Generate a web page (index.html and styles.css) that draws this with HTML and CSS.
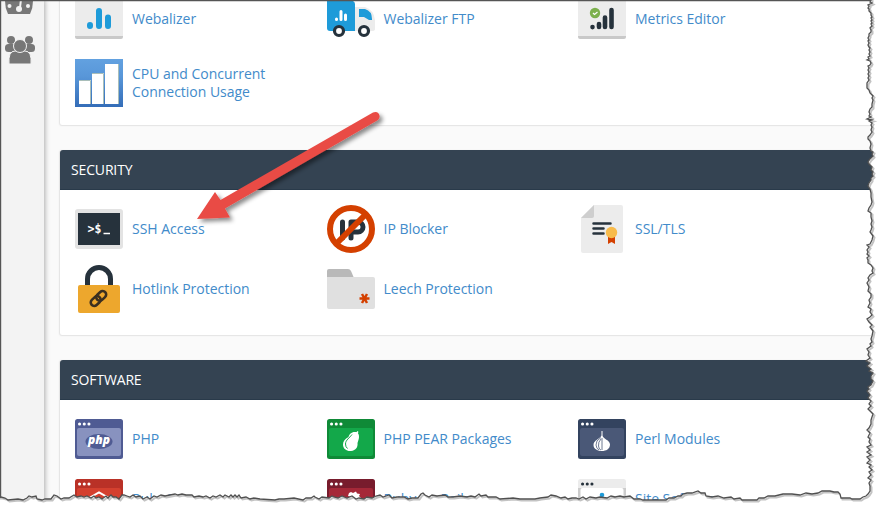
FILE: index.html
```html
<!DOCTYPE html>
<html lang="en">
<head>
<meta charset="utf-8">
<title>cPanel</title>
<link rel="stylesheet" href="styles.css">
</head>
<body>
<div class="app">
  <nav class="sidebar">
    <svg class="nav-icon" width="30" height="28" viewBox="0 0 30 28"><path d="M3 28Q0 22 0 15A14 14 0 0 1 28 15Q28 22 25 28Z" fill="#777"/><circle cx="4.500" cy="20" r="2" fill="#f3f3f3"/><circle cx="23" cy="20" r="2" fill="#f3f3f3"/><path d="M16 13L15 22" stroke="#f3f3f3" stroke-width="2"/><circle cx="14" cy="23" r="3" fill="#f3f3f3"/></svg>
    <svg class="nav-icon" width="30" height="28" viewBox="0 0 30 28" fill="#777"><circle cx="6" cy="4" r="4"/><circle cx="24" cy="4" r="4"/><rect y="8" width="11" height="8" rx="3.500"/><rect x="19" y="8" width="11" height="8" rx="3.500"/><path d="M4 28Q3 15 10 15H20Q27 15 26 28Z" stroke="#f3f3f3"/><circle cx="15" cy="10" r="6.500" stroke="#f3f3f3"/></svg>
  </nav>
  <main class="content">
    <section class="panel metrics">
      <div class="grid">
        <a class="item"><svg width="48" height="48" viewBox="0 0 48 48"><rect width="48" height="44" rx="2" fill="#c9c9c9"/><path d="M0 0H48V41H0Z" fill="#ececec"/><path d="M15 30v1M24 16v15M33 22.500v8.500" stroke="#1e9bd9" stroke-width="6" stroke-linecap="round"/></svg><span>Webalizer</span></a>
        <a class="item"><svg width="48" height="48" viewBox="0 0 48 48"><path d="M0 6H26Q28 7 28 9V36H3Q0 36 0 33Z" fill="#1e9bd9"/><path d="M28 12H38Q47 15 48 25V34Q48 36 45 36H28Z" fill="#ececec"/><path d="M32 14H38Q45 16 45 24V25H42L37 22H32Z" fill="#1e9bd9"/><path d="M9.500 24v.5M14 16.500v8M18.500 20v4.500" stroke="#fff" stroke-width="3" stroke-linecap="round"/><g fill="#fff" stroke="#26323c" stroke-width="3.200"><circle cx="12" cy="36" r="4.500"/><circle cx="37" cy="36" r="4.500"/></g></svg><span>Webalizer FTP</span></a>
        <a class="item"><svg width="48" height="48" viewBox="0 0 48 48"><rect width="48" height="44" rx="2" fill="#c9c9c9"/><path d="M0 0H48V41H0Z" fill="#ececec"/><path d="M14.500 32v.1M21 29v3M27 22.500v9.500M33.500 15v17" stroke="#26323c" stroke-width="4.600" stroke-linecap="round"/><circle cx="17" cy="18" r="5.200" fill="#7cb04d"/><path d="M15 18l1.500 1.500L19.500 17" fill="none" stroke="#fff" stroke-width="1.200"/></svg><span>Metrics Editor</span></a>
        <a class="item"><svg width="48" height="48" viewBox="0 0 48 48"><defs><linearGradient id="sky" x2="0" y2="1"><stop stop-color="#62a1e0"/><stop offset=".35" stop-color="#5997d9"/><stop offset="1" stop-color="#346db8"/></linearGradient></defs><path d="M0 0H48V48H0Z" fill="url(#sky)"/><path d="M4 21H16V45H4ZM17 14H29V45H17ZM30 5H44V45H30Z" fill="#fff"/><path d="M4 21.500H15.500V45M17 14.500H28.500V45M43.500 5V45" fill="none" stroke="#a9beb9"/></svg><span>CPU and Concurrent Connection Usage</span></a>
      </div>
    </section>

    <section class="panel security">
      <h2>SECURITY</h2>
      <div class="grid">
        <a class="item"><svg width="48" height="48" viewBox="0 0 48 48"><rect y="4" width="48" height="40" rx="3" fill="#e3e3e3"/><path d="M3 8H45V40H3Z" fill="#26323c"/><text x="12.500" y="28" class="prompt">&gt;$</text><path d="M28.500 28.500H35" stroke="#fff" stroke-width="1.500"/></svg><span>SSH Access</span></a>
        <a class="item"><svg width="48" height="48" viewBox="0 0 48 48"><path d="M15.500 17v16M24 33V17h7a5 5 0 0 1 0 10h-7" fill="none" stroke="#26323c" stroke-width="5" stroke-linecap="round" stroke-linejoin="round"/><path d="M9 39L39 9" stroke="#d44000" stroke-width="6"/><circle cx="24" cy="24" r="21" fill="none" stroke="#d44000" stroke-width="6"/></svg><span>IP Blocker</span></a>
        <a class="item"><svg width="48" height="48" viewBox="0 0 48 48"><path d="M3 13L16 0H43Q45 0 45 2V46Q45 48 43 48H5Q3 48 3 46Z" fill="#ececec"/><path d="M3 13L16 0V11Q16 13 14 13Z" fill="#cecece"/><path d="M15.500 18.500h17M15.500 23.500h10M15.500 28.500h10" stroke="#26323c" stroke-width="2.500" stroke-linecap="round"/><path d="M30 31H37V39L33.500 37L30 39Z" fill="#d44000"/><circle cx="33.500" cy="27.500" r="5.700" fill="#f8bb4b"/></svg><span>SSL/TLS</span></a>
        <a class="item"><svg width="48" height="48" viewBox="0 0 48 48"><path d="M12.500 22V14a11.500 11.500 0 0 1 23 0V22" fill="none" stroke="#26323c" stroke-width="5"/><rect x="3" y="20" width="42" height="28" rx="2" fill="#eda72d"/><g fill="none" stroke="#3b2f20" stroke-width="2.600"><rect x="15" y="33" width="11" height="7" rx="3.500" transform="rotate(-43 20 36)"/><rect x="21.500" y="27.500" width="11" height="7" rx="3.500" transform="rotate(-43 26.500 32)"/></g></svg><span>Hotlink Protection</span></a>
        <a class="item"><svg width="48" height="48" viewBox="0 0 48 48"><path d="M0 13V6Q0 4 2 4H21Q23 4 24 6L27 13Z" fill="#b9b9b9"/><path d="M0 12H46Q48 12 48 14V42Q48 44 46 44H2Q0 44 0 42Z" fill="#e0e0e0"/><path d="M32.500 33.500h10M35 29l5 9M40 29l-5 9" stroke="#d44000" stroke-width="2.500"/></svg><span>Leech Protection</span></a>
      </div>
    </section>

    <section class="panel software">
      <h2>SOFTWARE</h2>
      <div class="grid">
        <a class="item"><svg width="48" height="48" viewBox="0 0 48 48"><rect y="4" width="48" height="40" rx="2.500" fill="#4f5b93"/><rect x="2" y="13" width="44" height="28" rx="2" fill="#8892bf"/><path d="M4.500 9h.1M9.200 9h.1M13.900 9h.1" class="dots"/><ellipse cx="24" cy="26.500" rx="13.500" ry="7.500" fill="#4f5b93"/><text x="24" y="29.300" class="php">php</text></svg><span>PHP</span></a>
        <a class="item"><svg width="48" height="48" viewBox="0 0 48 48"><rect y="4" width="48" height="40" rx="2.500" fill="#0f8a37"/><rect x="2" y="13" width="44" height="28" rx="2" fill="#13a84a"/><path d="M4.500 9h.1M9.200 9h.1M13.900 9h.1" class="dots"/><path d="M30.500 17.500C25 16 22.500 19 21.500 22C18 24 16 26 16 29.500C16 34 20 36.500 24 36C29 35.500 31 32 30.500 28C32 24 33 20.500 30.500 17.500Z" fill="#fff"/><path d="M29 19l2-2.500" stroke="#fff" stroke-width="1.500"/><path d="M25 19.500C22.500 23 18.500 25 18.500 29Q18.500 32 20.500 33.500" fill="none" stroke="#13a84a"/></svg><span>PHP PEAR Packages</span></a>
        <a class="item"><svg width="48" height="48" viewBox="0 0 48 48"><rect y="4" width="48" height="40" rx="2.500" fill="#33435f"/><rect x="2" y="13" width="44" height="28" rx="2" fill="#4a5877"/><path d="M4.500 9h.1M9.200 9h.1M13.900 9h.1" class="dots"/><path d="M23.500 16V20.500C22 24 15.500 25 15.500 30C15.500 34 20 36 24 36S32 34 32 29.500C32 25 25 24 24.500 20.500V16Z" fill="#fff"/><path d="M23 22.500Q17.500 25.500 18 30Q18.500 34 21 35M23 24Q20 27 20.500 31T23 35M24 23V35" fill="none" stroke="#4a5877" stroke-width=".8"/></svg><span>Perl Modules</span></a>
        <a class="item"><svg width="48" height="48" viewBox="0 0 48 48"><rect y="4" width="48" height="40" rx="2.500" fill="#b93127"/><rect x="2" y="13" width="44" height="28" rx="2" fill="#d4402f"/><path d="M4.500 9h.1M9.200 9h.1M13.900 9h.1" class="dots"/><path d="M15 22.500L24 17.500L33 22.500V32L24 37L15 32Z" fill="none" stroke="#fff" stroke-width="2"/></svg><span>RubyGems</span></a>
        <a class="item"><svg width="48" height="48" viewBox="0 0 48 48"><rect y="4" width="48" height="40" rx="2.500" fill="#781c2d"/><rect x="2" y="13" width="44" height="28" rx="2" fill="#a52838"/><path d="M4.500 9h.1M9.200 9h.1M13.900 9h.1" class="dots"/><path d="M22 18l2-1 2 1 3-1.500 1 2 3 .500-1 2 2 2-3 1-8 6-2-5 4-3-4-1Z" fill="#fff"/></svg><span>Ruby on Rails</span></a>
        <a class="item"><svg width="48" height="48" viewBox="0 0 48 48"><rect y="4" width="48" height="40" rx="2.500" fill="#ececec"/><path d="M0 13H48V44H0Z" fill="#ccc"/><rect x="2.500" y="13" width="43" height="28" rx="2" fill="#fff"/><path d="M4.500 9h.1M9.200 9h.1M13.900 9h.1" class="dots dark"/><circle cx="24" cy="20" r="2.300" fill="#1e9bd9"/></svg><span>Site Software</span></a>
      </div>
    </section>
  </main>
</div>

<svg class="overlay" width="879" height="505" viewBox="0 0 879 505">
  <defs>
    <filter id="soft" x="-10%" y="-10%" width="120%" height="130%"><feDropShadow dx="3" dy="3" stdDeviation="2" flood-opacity=".45"/></filter>
    <path id="edge" d="M871 .5L870 2 872 3 870 4 868 5 869 6 868 8 869 9 869 11 871 13 871 15 872 17 871 18 872 20 871 21 872 23 871 24 872 26 870 28 871 30 871 32 869 34 869 36 868 38 869 40 868 41 869 43 868 45 869 47 870 48 869 50 870 52 869 54 870 56 868 57 869 59 867 60 870 61 871 63 870 65 868 66 869 68 868 70 869 72 868 74 869 76 868 78 869 80 867 83 867 88 869 90 870 93 873 96 872 98 873 100 872 104 872 107 870 109 869 112 870 114 869 116 871 117 867 119 872 120 869 121 872 123 871 125 872 127 871 130 872 132 870 135 868 137 868 139 870 141 871 144 870 148 871 151 873 152 872 154 873 156 870 159 868 162 869 164 872 167 871 170 873 172 872 174 873 176 871 178 871 180 869 183 868 186 870 189 871 193 871 197 872 202 871 205 869 208 868 211 871 213 871 217 872 221 871 224 872 227 871 230 870 232 873 236 872 240 870 244 867 245 869 247 867 250 868 252 867 254 869 256 867 258 868 260 868 263 871 265 873 268 872 271 873 273 870 275 868 278 869 280 867 283 869 287 868 291 871 294 871 297 869 300 870 303 868 307 871 309 870 312 872 315 870 317 867 319 869 322 872 325 870 327 873 331 872 336 871 339 872 342 870 344 871 346 867 349 869 352 868 355 870 358 866 361 870 363 867 366 871 369 869 371 873 373 871 376 871 379 873 381 871 385 868 387 869 389 867 391 870 395 868 398 871 401 869 404 871 406 868 409 870 411 873 414 872 417 871 420 871 424 869 428 867 430 870 433 868 437 870 439 869 442 871 445 867 447 870 450 867 452 871 455 867 457 870 460 867 463 871 465 869 467 872 470 869 472 871 475 868 478 871 480 869 483 870 486 870 491 868 494 866 496 863 497 860 499 852 499 850 498 841 498 840 494 838 492 834 492 830 491 822 491 818 493 812 494 806 493 800 495 792 494 783 494 775 496 768 496 764 498 759 498 757 500 742 500 740 498 734 499 731 497 724 498 718 496 712 497 706 496 705 493 701 493 698 491 692 493 687 493 683 494 681 496 678 496 674 498 669 498 666 500 643 500 640 499 634 499 630 496 624 497 620 496 615 497 611 496 607 498 600 497 596 498 590 497 586 499 583 497 579 499 576 498 572 498 568 499 565 497 561 498 556 496 551 495 548 497 540 498 535 499 520 499 513 498 500 499 496 497 488 497 486 495 481 496 479 494 475 497 471 496 467 497 460 496 453 497 448 497 445 495 437 496 432 495 429 497 425 495 423 493 421 494 418 498 412 498 408 499 404 497 397 497 392 498 389 495 383 497 380 495 376 496 372 498 367 497 364 499 359 498 356 499 352 496 347 498 342 496 338 498 334 497 332 496 329 498 322 497 319 499 315 497 314 496 311 498 306 498 303 500 294 498 284 499 279 499 275 500 260 499 254 498 250 499 246 497 241 498 239 495 237 497 235 495 233 497 231 495 229 497 225 495 223 497 220 495 216 497 213 496 210 498 206 496 203 497 199 496 194 497 192 495 186 495 182 494 178 495 175 494 170 495 165 496 161 495 157 497 154 496 150 499 147 497 143 499 140 496 136 497 133 495 130 497 127 496 124 495 122 495 119 499 116 497 113 497 111 495 108 498 106 496 102 499 99 497 96 498 94 496 91 498 87 496 84 497 81 496 77 497 74 495 69 498 64 498 61 499 57 496 54 495 51 499 45 499 42 500 37 499 36 496 32 497 29 496 27 498 23 500 18 499 8 500 5 498 1 497L-5 497V515H889V-5H871Z"/>
    <clipPath id="outside"><use href="#edge"/></clipPath>
  </defs>
  <use href="#edge" class="paper"/>
  <g clip-path="url(#outside)"><use href="#edge" class="edge-shadow"/></g>
  <use href="#edge" class="edge"/>
  <path d="M0 .5H871M.5 0V498" fill="none" stroke="#555" stroke-width="1.400"/>
  <path d="M197 219L215 192L220.500 200L373 112.500C378 110 382 116 378 120L225 208.500L230 217.500Z" fill="#e94b45" filter="url(#soft)"/>
</svg>
</body>
</html>
```
FILE: styles.css
```css
* { box-sizing: border-box; }
body { margin: 0; width: 879px; height: 505px; overflow: hidden; background: #fff; font: 14px/18px "Open Sans", sans-serif; position: relative; }
.app { display: flex; height: 505px; overflow: hidden; background: #fafafa; }
.sidebar { flex: none; width: 44px; padding-left: 5px; background: #f3f3f3; box-shadow: 1px 0 5px rgba(0,0,0,.32); display: flex; flex-direction: column; gap: 22px; }
.nav-icon { display: block; flex: none; }
.nav-icon:first-child { margin-top: -14px; }
.content { flex: none; width: 835px; padding-left: 15px; display: flex; flex-direction: column; gap: 24px; }
.panel { flex: none; width: 830px; background: #fff; border: 1px solid #e6e6e6; border-radius: 3px; box-shadow: 0 0 2px rgba(0,0,0,.06); }
.metrics { height: 146px; margin-top: -20px; }
.security { height: 186px; }
.software { height: 220px; }
.panel h2 { margin: -1px -1px 0 0; height: 40px; padding: 0 11px; border-radius: 3px 3px 0 0; border-bottom: 1px solid #293a4a; background: #344352; color: #fff; font-size: 14px; font-weight: 400; line-height: 40px; letter-spacing: -.15px; }
.grid { display: grid; grid-template-columns: repeat(3, 251.500px); grid-auto-rows: 48px; row-gap: 12px; padding: 15px; }
.metrics .grid { padding-top: 14px; row-gap: 16px; }
.item { display: flex; align-items: center; gap: 9px; color: #428bca; text-decoration: none; }
.item svg { flex: none; }
.item span { width: 150px; letter-spacing: -.02px; }
.prompt { fill: #fff; font: bold 11.500px "DejaVu Sans Mono", monospace; }
.php { fill: #fff; font: italic 800 12px "Open Sans", sans-serif; text-anchor: middle; }
.dots { stroke: #fff; stroke-width: 3; stroke-linecap: round; }
.dots.dark { stroke: #26323c; }
.overlay { position: absolute; inset: 0; pointer-events: none; }
.paper { fill: #fff; }
.edge, .edge-shadow { fill: none; stroke: #505050; stroke-width: 1.300; }
.edge-shadow { stroke: #aaa; stroke-width: 2; transform: translate(1.500px, 1.500px); opacity: .7; }
```
